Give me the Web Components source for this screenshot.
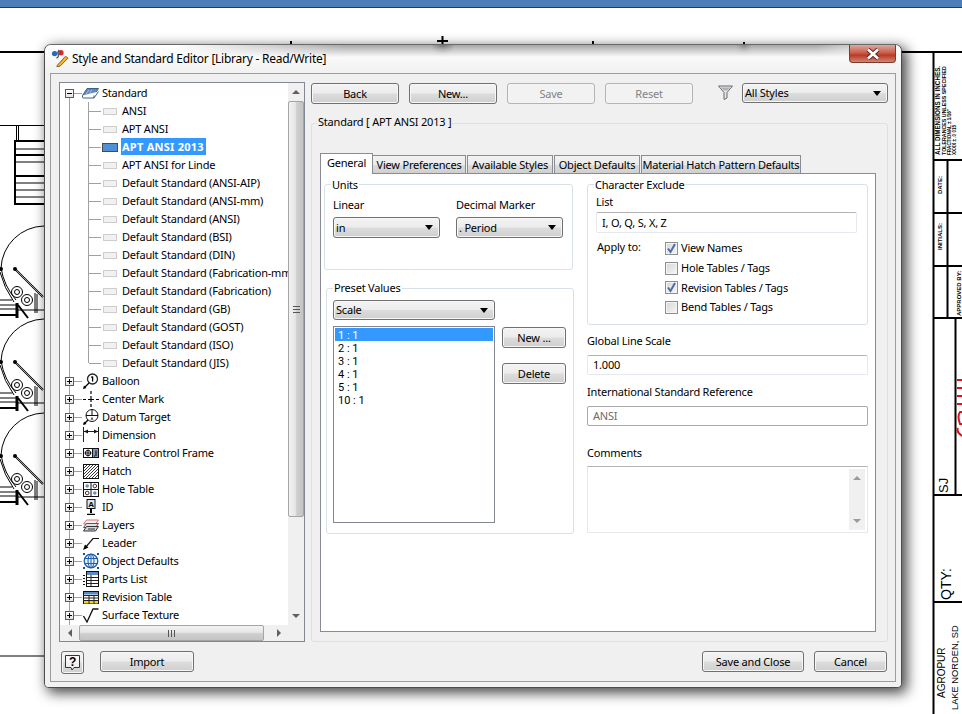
<!DOCTYPE html>
<html><head><meta charset="utf-8"><title>Style and Standard Editor</title>
<style>
html,body{margin:0;padding:0;background:#fff}
body{width:962px;height:714px;position:relative;overflow:hidden;font:11px/14px "Noto Sans","Liberation Sans",sans-serif;letter-spacing:-.2px;color:#000}
</style></head><body>
<x-appbar></x-appbar>
<x-drawing></x-drawing>
<x-dialog caption="Style and Standard Editor [Library - Read/Write]">
  <x-tree style="width:246px;height:560px">
    <x-tree-row kind="open"><svg slot="icon" width="17" height="12" viewBox="0 0 17 12"><path d="M.5 8.500L5 1.500H16.500L12 8.500Z" fill="#6287ba" stroke="#3c5f8c"/><path d="M.5 8.500V10Q.5 11 1.500 11H12L16.500 4.500M12 8.500V11" fill="#fff" stroke="#3c5f8c"/><path d="M4 7L7 3M7 7L10 3" stroke="#a9c0de"/></svg>Standard</x-tree-row>
    <x-tree-row kind="child">ANSI</x-tree-row>
    <x-tree-row kind="child">APT ANSI</x-tree-row>
    <x-tree-row kind="child" selected><b style="letter-spacing:.25px">APT ANSI 2013</b></x-tree-row>
    <x-tree-row kind="child">APT ANSI for Linde</x-tree-row>
    <x-tree-row kind="child">Default Standard (ANSI-AIP)</x-tree-row>
    <x-tree-row kind="child">Default Standard (ANSI-mm)</x-tree-row>
    <x-tree-row kind="child">Default Standard (ANSI)</x-tree-row>
    <x-tree-row kind="child">Default Standard (BSI)</x-tree-row>
    <x-tree-row kind="child">Default Standard (DIN)</x-tree-row>
    <x-tree-row kind="child">Default Standard (Fabrication-mm)</x-tree-row>
    <x-tree-row kind="child">Default Standard (Fabrication)</x-tree-row>
    <x-tree-row kind="child">Default Standard (GB)</x-tree-row>
    <x-tree-row kind="child">Default Standard (GOST)</x-tree-row>
    <x-tree-row kind="child">Default Standard (ISO)</x-tree-row>
    <x-tree-row kind="last">Default Standard (JIS)</x-tree-row>
    <x-tree-row><svg slot="icon" width="16" height="16" viewBox="0 0 16 16"><circle cx="9.500" cy="6" r="5" fill="#fff" stroke="#222" stroke-width="1.300"/><path d="M9.600 3.500V8.500M8.300 4.500L9.600 3.500" stroke="#000" stroke-width="1.300" fill="none"/><path d="M6 10L1 15" stroke="#000" stroke-width="1.200"/><path d="M0 16L1 12.500L3.500 15Z"/></svg>Balloon</x-tree-row>
    <x-tree-row><svg slot="icon" width="16" height="16" viewBox="0 0 16 16"><path d="M0 8.500H3M5 8.500H11M13 8.500H16M8 0V3M8 5V11M8 13V16" stroke="#000" stroke-width="1.200" fill="none"/></svg>Center Mark</x-tree-row>
    <x-tree-row><svg slot="icon" width="16" height="16" viewBox="0 0 16 16"><circle cx="9" cy="6.500" r="6" fill="#fff" stroke="#111"/><path d="M3 6.500H15M9 .5V6.500" stroke="#111"/><path d="M8 11L9 8.500L10 11" stroke="#555" fill="none"/><path d="M5 11L1 15" stroke="#000" stroke-width="1.200"/><path d="M0 16L1 12.500L3.500 15Z"/></svg>Datum Target</x-tree-row>
    <x-tree-row><svg slot="icon" width="16" height="16" viewBox="0 0 16 16"><path d="M.5 0V15M15.500 0V15M1 4.500H15" stroke="#222" fill="none"/><path d="M1 4.500L5 2.500V6.500ZM15 4.500L11 2.500V6.500Z" fill="#111"/></svg>Dimension</x-tree-row>
    <x-tree-row><svg slot="icon" width="16" height="11" viewBox="0 0 16 11"><rect x=".5" y=".5" width="15" height="9" fill="#fff" stroke="#111"/><path d="M9.500 0V10" stroke="#111"/><circle cx="5" cy="5" r="2.700" fill="none" stroke="#111"/><path d="M1.500 5H8.500M5 1.500V8.500" stroke="#111"/><rect x="10" y="1" width="5" height="8" fill="#7d97b8"/><path d="M13 2.500V8M11 8H12" stroke="#000"/></svg>Feature Control Frame</x-tree-row>
    <x-tree-row><svg slot="icon" width="16" height="15" viewBox="0 0 16 15"><rect x=".5" y=".5" width="15" height="14" fill="#fff" stroke="#111"/><path d="M1 4L4 1M1 7L7 1M1 10L10 1M1 13L13 1M3 14L15 2M6 14L15 5M9 14L15 8M12 14L15 11" stroke="#222" stroke-width=".9"/></svg>Hatch</x-tree-row>
    <x-tree-row><svg slot="icon" width="16" height="15" viewBox="0 0 16 15"><rect x=".5" y=".5" width="15" height="14" fill="#fff" stroke="#111"/><path d="M8 0V15M0 7.500H16" stroke="#111"/><circle cx="4.200" cy="4" r="1.800" fill="#6f8fb5"/><circle cx="11.800" cy="4" r="1.800" fill="none" stroke="#333"/><circle cx="4.200" cy="11" r="1.800" fill="none" stroke="#333"/><circle cx="11.800" cy="11" r="1.800" fill="#6f8fb5"/></svg>Hole Table</x-tree-row>
    <x-tree-row><svg slot="icon" width="16" height="16" viewBox="0 0 16 16"><rect x="4" y=".5" width="8" height="9" fill="#dfe5ee" stroke="#111"/><text x="8" y="8" font-size="8" font-weight="700" text-anchor="middle" font-family="Liberation Sans">A</text><path d="M8 10V14" stroke="#000" stroke-width="2"/><path d="M4 15.500H12" stroke="#000" stroke-width="1.500"/></svg>ID</x-tree-row>
    <x-tree-row><svg slot="icon" width="16" height="13" viewBox="0 0 16 13"><path d="M3.500 1H15.500L12.500 5H.5Z" fill="#f2f2f2" stroke="#e06a6a"/><path d="M3.500 4.500H15.500L12.500 8.500H.5Z" fill="#e0e4ea" stroke="#555"/><path d="M3.500 7.500H15.500L12.500 12H.5Z" fill="#d0d6de" stroke="#333"/><path d="M5 10H12" stroke="#333"/></svg>Layers</x-tree-row>
    <x-tree-row><svg slot="icon" width="16" height="13" viewBox="0 0 16 13"><path d="M16 1.500H10L2 11" fill="none" stroke="#111" stroke-width="1.200"/><path d="M0 13L2 7.500L5.500 10.500Z" fill="#000"/></svg>Leader</x-tree-row>
    <x-tree-row><svg slot="icon" width="16" height="16" viewBox="0 0 16 16"><circle cx="8" cy="8" r="6.800" fill="#e6f0fa" stroke="#1d5fae" stroke-width="1.300"/><ellipse cx="8" cy="8" rx="3" ry="6.800" fill="none" stroke="#1d5fae"/><path d="M8 1V15M1.200 5.500H14.800M1.200 10.500H14.800" stroke="#1d5fae"/><path d="M0 0H2V2H0ZM14 0H16V2H14ZM0 14H2V16H0ZM14 14H16V16H14Z" fill="#1d4f96"/></svg>Object Defaults</x-tree-row>
    <x-tree-row><svg slot="icon" width="16" height="16" viewBox="0 0 16 16"><rect x="3.500" y=".5" width="12" height="15" fill="#fff" stroke="#111"/><rect x="4" y="1" width="11" height="3" fill="#5b8bc4"/><path d="M4 6.500H15M4 9.500H15M4 12.500H15M8 4V15" stroke="#222"/><path d="M0 4.500H2M0 7.500H2M0 10.500H2M0 13.500H2" stroke="#111"/></svg>Parts List</x-tree-row>
    <x-tree-row><svg slot="icon" width="16" height="13" viewBox="0 0 16 13"><rect x=".5" y=".5" width="15" height="12" fill="#fff" stroke="#111"/><rect x="1" y="1" width="14" height="2.500" fill="#5b8bc4"/><rect x="1" y="9.500" width="14" height="3" fill="#f3d21b"/><path d="M0 4.500H16M0 7H16M0 9.500H16M6 4V13M11 4V13" stroke="#222"/></svg>Revision Table</x-tree-row>
    <x-tree-row><svg slot="icon" width="16" height="15" viewBox="0 0 16 15"><path d="M.5 8L4 14L10 1H15.500" fill="none" stroke="#111" stroke-width="1.300"/></svg>Surface Texture</x-tree-row>
  </x-tree>
  <x-col slot="right">
    <x-toolbar>
      <x-button w="88">Back</x-button><x-button w="88">New...</x-button><x-button w="88" disabled>Save</x-button><x-button w="88" disabled>Reset</x-button>
      <svg style="margin-left:25px;margin-right:9px;flex:none" width="15" height="15" viewBox="0 0 15 15"><path d="M.5 1H14.500L9 7.500V13L6 14.500V7.500Z" fill="#e4e4e4" stroke="#6b6b6b"/><path d="M2.500 2.500H12.500L9 5.500H6Z" fill="#aab3bc"/></svg>
      <x-select w="146" h="20">All Styles</x-select>
    </x-toolbar>
    <x-group legend="Standard [ APT ANSI 2013 ]" w="577" h="519" pad="29px 0 0 8px" radius="3" lx="5" ly="-9">
      <x-tabs>
        <x-tab w="53" active>General</x-tab><x-tab w="93">View Preferences</x-tab><x-tab w="86" gap="1">Available Styles</x-tab><x-tab w="86" gap="1">Object Defaults</x-tab><x-tab w="160" gap="1">Material Hatch Pattern Defaults</x-tab>
        <x-general slot="panel"></x-general>
      </x-tabs>
    </x-group>
  </x-col>
  <x-footer slot="footer">
    <x-helpbtn></x-helpbtn>
    <x-button w="94" style="margin-left:16px">Import</x-button>
    <x-button w="102" style="margin-left:auto">Save and Close</x-button>
    <x-button w="73" style="margin-left:10px;margin-right:1px">Cancel</x-button>
  </x-footer>
</x-dialog>
<script>
const def=(name,css,html)=>customElements.define(name,class extends HTMLElement{
  connectedCallback(){ if(this.shadowRoot) return;
    const s=this.attachShadow({mode:'open'});
    s.innerHTML='<style>'+css(this)+'</style>'+(typeof html==='function'?html(this):html);
  }});
const a=(e,n,d)=>e.hasAttribute(n)?e.getAttribute(n):d;
const btnGrad='linear-gradient(#f3f3f3 0,#ececec 48%,#dcdcdc 52%,#cfcfcf 100%)';

def('x-appbar',()=>`:host{display:block;height:7px;background:#4d7eb7;border-bottom:1px solid #1f3d63;box-sizing:content-box}`,'');

def('x-drawing',()=>`:host{position:absolute;left:0;top:0;width:962px;height:714px;display:block}svg{display:block}text{font-family:"Liberation Sans",sans-serif;letter-spacing:0}`,()=>{
 const tank=`<g fill="none" stroke="#000"><path d="M44 0A44 44 0 0 0 1 42Q4 60 16 74"/><path d="M0 46Q4 62 14 76"/><path d="M15 43L43 71" stroke-width="2"/><path d="M15 43L43 71" stroke="#fff" stroke-width=".6"/><circle cx="17" cy="66" r="5.500"/><circle cx="17" cy="66" r="2.500"/><circle cx="27" cy="74" r="5.500"/><circle cx="27" cy="74" r="2.500"/><path d="M35 67V87M37 68V87"/><path d="M0 74H12M0 79H16M0 83H16M17 84H44"/><path d="M17 77V92" stroke-width="3"/><path d="M0 89H17" stroke-width="2"/><path d="M18 79L28 92" stroke-width="2"/></g><circle cx="15" cy="43" r="2" fill="#000"/><circle cx="1" cy="43" r="2" fill="#000"/>`;
 const T=(x,y,s,t,o='')=>`<text transform="translate(${x} ${y}) rotate(-90)" font-size="${s}" ${o}>${t}</text>`;
 return `<svg width="962" height="714" viewBox="0 0 962 714">
 <path d="M0 52H60M890 52H962" stroke="#000" stroke-width="2"/>
 <path d="M0 125.500H60" stroke="#000"/>
 <path d="M18.500 125V141M16.500 126V141" stroke="#000"/>
 <g fill="none" stroke="#000"><rect x="15" y="141" width="40" height="63" stroke-width="2"/><path d="M16 149H50M16 162H50M16 183H50M16 190H50M16 197H50"/><path d="M16 155H50M16 176H50" stroke-width="2"/></g>
 <g transform="translate(0 226)">${tank}</g><g transform="translate(0 319)">${tank}</g><g transform="translate(0 413)">${tank}</g>
 <path d="M0 656H60" stroke="#000"/>
 <path d="M442.500 36V46M437 41H448M291 41V46M593 41V46M744 42V46" stroke="#000" stroke-width="2"/>
 <g stroke="#000" stroke-width="2" fill="none"><path d="M933.500 52V714M947.500 160V318M955.500 318V495"/><path d="M933 160H962M933 213H962M933 266H962M933 318H962M933 495H962M933 602H962"/></g>
 ${T(940,155,6.300,'ALL DIMENSIONS IN INCHES.','font-weight="700"')}
 ${T(946,155,5.300,'TOLERANCES UNLESS SPECIFIED','font-weight="700"')}
 ${T(951,155,4.600,'FRACTIONAL ± 1/16"','font-weight="700"')}
 ${T(956,155,4.600,'XXXX ± .0 015','font-weight="700"')}
 ${T(942,194,6,'DATE:','font-weight="700"')}
 ${T(942,250,6,'INITIALS:','font-weight="700"')}
 ${T(961,316,6,'APPROVED BY:','font-weight="700"')}
 ${T(948,493,13,'SJ')}
 ${T(951,600,14,'QTY:')}
 ${T(945,698,10,'AGROPUR')}
 ${T(958,710,9.300,'LAKE NORDEN, SD')}
 <g fill="none" stroke="#e01020" stroke-width="2"><path d="M957 380H962M957 388H962M957 396H962M957 404H962"/><path d="M962 412H960Q957 416 960 424H962M958 428Q956 432 962 436"/></g>
 </svg>`});

def('x-dialog',()=>`:host{position:absolute;left:44px;top:44px;width:858px;height:644px;box-sizing:border-box;display:flex;flex-direction:column;border-radius:7px 7px 5px 5px;background:#f1f1f1;box-shadow:4px 4px 13px 1px rgba(0,0,0,.72);border:1px solid #4c4c4c;border-top-color:#6a6a6a;padding:0 5px 5px}
 .bg{position:absolute;inset:0;border-radius:6px 6px 4px 4px;background:linear-gradient(#fff,#f1f1f1 28px) 0 0 no-repeat;pointer-events:none}
 .band{position:absolute;left:0;right:0;top:0;height:12px;border-radius:6px 6px 0 0;background:radial-gradient(ellipse 12px 12px at 398px 0,rgba(70,70,70,.6),rgba(70,70,70,0)) no-repeat,radial-gradient(ellipse 8px 11px at 699px 0,rgba(90,90,90,.5),rgba(90,90,90,0)) no-repeat,linear-gradient(90deg,rgba(150,150,150,0) 15%,rgba(150,150,150,.85) 35%,rgba(150,150,150,.85) 90%,rgba(150,150,150,0));-webkit-mask-image:linear-gradient(#000,transparent);mask-image:linear-gradient(#000,transparent);pointer-events:none}
 .title{position:relative;height:28px;display:flex;align-items:center;flex:none;font:12px/16px "Noto Sans","Liberation Sans",sans-serif;letter-spacing:-.25px;color:#000;padding:0 0 0 1px}
 .title svg.ico{margin-right:3px;flex:none}
 .close{position:absolute;right:0;top:0;width:47px;height:18px;border:1px solid #7a3a30;border-top:none;box-sizing:border-box;border-radius:0 0 4px 4px;background:linear-gradient(#dba99f,#c9604c 45%,#b93a26 60%,#d28674);display:flex;align-items:center;justify-content:center}
 .panel{position:relative;flex:1;border:1px solid #9c9c9c;background:#f0f0f0;padding:8px 7px 8px 8px;display:flex;flex-direction:column;min-height:0}
 .main{display:flex;gap:6px;flex:none}
 .foot{margin-top:9px}`,
 e=>`<div class="bg"></div><div class="band"></div><div class="title"><svg class="ico" width="18" height="20" viewBox="0 0 20 22"><circle cx="4" cy="5" r="3" fill="#2b69b8"/><circle cx="11" cy="4" r="3" fill="#d8282b"/><path d="M6 10Q9 9 8 6Q7 3 9 1" stroke="#555" stroke-width="1.500" fill="none"/><path d="M7 18L16 8L19 10L10 19L6.500 19.500Z" fill="#f3b32c" stroke="#7a5a10"/></svg>${a(e,'caption','')}<div class="close"><svg width="16" height="12" viewBox="0 0 16 12"><path d="M3 1.500L13 10.500M13 1.500L3 10.500" stroke="#5a2018" stroke-width="4.500"/><path d="M3 1.500L13 10.500M13 1.500L3 10.500" stroke="#fff" stroke-width="2.700"/></svg></div></div>
 <div class="panel"><div class="main"><slot></slot><slot name="right"></slot></div><div class="foot"><slot name="footer"></slot></div></div>`);

def('x-col',()=>`:host{display:flex;flex-direction:column;width:577px;padding-top:1px}`,'<slot></slot>');
def('x-toolbar',()=>`:host{display:flex;gap:0;height:21px;margin-bottom:19px;align-items:flex-start}::slotted(x-button){margin-right:10px}::slotted(x-button:nth-of-type(4)){margin-right:0}::slotted(svg){margin-top:2px}`,'<slot></slot>');
def('x-footer',()=>`:host{display:flex;padding-left:2px;align-items:flex-start}`,'<slot></slot>');

def('x-button',e=>`:host{display:flex;align-items:center;justify-content:center;flex:none;box-sizing:border-box;width:${a(e,'w',88)}px;height:${a(e,'h',21)}px;border:1px solid ${e.hasAttribute('disabled')?'#b2b5b8':'#707070'};border-radius:3px;background:${e.hasAttribute('disabled')?'#f2f2f2':btnGrad};box-shadow:inset 0 0 0 1px ${e.hasAttribute('disabled')?'#f4f4f4':'#f7f7f7'};color:${e.hasAttribute('disabled')?'#838383':'#000'};white-space:nowrap}`,'<slot></slot>');

def('x-helpbtn',()=>`:host{display:block;width:23px;height:23px;box-sizing:border-box;border:1px solid #707070;border-radius:3px;background:${btnGrad};box-shadow:inset 0 0 0 1px #f7f7f7}svg{display:block;margin:2px}text{font:700 12px "Liberation Sans",sans-serif}`,`<svg width="17" height="17" viewBox="0 0 17 17"><path d="M1.500 1.500H15.500V13.500H10L8 16L7 13.500H1.500Z" fill="#fff" fill-opacity=".6" stroke="#333"/><text x="8.500" y="11.500" text-anchor="middle">?</text></svg>`);

def('x-select',e=>`:host{display:flex;align-items:center;flex:none;box-sizing:border-box;width:${a(e,'w',100)}px;height:${a(e,'h',21)}px;border:1px solid #707070;border-radius:3px;background:${btnGrad};box-shadow:inset 0 0 0 1px #f7f7f7;padding:0 5px 0 2px;white-space:nowrap}.t{flex:1}.a{width:0;height:0;border:4px solid transparent;border-top:5px solid #000;border-bottom:0;margin-right:1px}`,`<span class="t"><slot></slot></span><span class="a"></span>`);

def('x-group',e=>`:host{display:block;position:relative;box-sizing:border-box;width:${a(e,'w',100)}px;height:${a(e,'h',100)}px;border:1px solid #d9e0e8;border-radius:${a(e,'radius',3)}px;padding:${a(e,'pad','0')}}.l{position:absolute;left:${a(e,'lx',6)}px;top:${a(e,'ly',-7)}px;background:${a(e,'lbg','#f0f0f0')};padding:0 1px;line-height:14px;white-space:nowrap}`,e=>`<div class="l">${a(e,'legend','')}</div><slot></slot>`);

def('x-tree',()=>`:host{display:grid;box-sizing:border-box;flex:none;border:1px solid #828790;background:#fff;grid-template-columns:1fr 16px;grid-template-rows:1fr 16px}
 .v{overflow:hidden;padding-top:1px;background:linear-gradient(#a0a0a0,#a0a0a0) 9px 14px/1px 100% no-repeat;min-width:0}
 .corner{background:#f0f0f0}`,`<div class="v"><slot></slot></div><x-scrollbar dir="v" b="90"></x-scrollbar><x-scrollbar dir="h" b="5"></x-scrollbar><div class="corner"></div>`);

def('x-tree-row',e=>{const sel=e.hasAttribute('selected');
 return `:host{display:block;height:18px;white-space:nowrap;position:relative}
 .r{display:flex;align-items:center;height:18px}
 .box{box-sizing:border-box;flex:none;width:9px;height:9px;border:1px solid #5a5a5a;background:linear-gradient(#fff,#e4e4e4);margin-left:5px;position:relative}
 .box:before{content:"";position:absolute;left:1px;right:1px;top:3px;height:1px;background:#000}
 .box.plus:after{content:"";position:absolute;top:1px;bottom:1px;left:3px;width:1px;background:#000}
 .hl{flex:none;width:8px;height:1px;background:#a0a0a0}
 .ic{flex:none;width:17px;height:18px;display:flex;align-items:center;justify-content:center;margin-right:2px}
 .vl{flex:none;width:1px;align-self:stretch;margin-left:28px;background:#a0a0a0}
 .vl.last{align-self:flex-start;height:9px}
 .h2{flex:none;width:12px;height:1px;background:#a0a0a0}
 .sheet{flex:none;width:14px;height:7px;box-sizing:border-box;border:1px solid #cdcdcd;background:#f1f1f1;margin:0 3px 0 2px}
 .sheet.s{width:16px;height:9px;border-color:#4a4a4a;background:#4f8fd4;margin:0 2px 0 1px}
 .txt{padding:0 1px;line-height:16px;margin-left:1px;${sel?'background:#3399ff;color:#fff;padding:1px 2px 0 1px;margin-top:-1px;':''}}`},
 e=>{const k=a(e,'kind','root');
 if(k==='child'||k==='last')return `<div class="r"><span class="vl ${k==='last'?'last':''}"></span><span class="h2"></span><span class="sheet ${e.hasAttribute('selected')?'s':''}"></span><span class="txt"><slot></slot></span></div>`;
 return `<div class="r"><span class="box ${k==='open'?'':'plus'}"></span><span class="hl"></span><span class="ic"><slot name="icon"></slot></span><span class="txt" style="margin-left:0"><slot></slot></span></div>`});

def('x-scrollbar',e=>{const v=a(e,'dir','v')==='v';return `:host{display:flex;flex-direction:${v?'column':'row'};background:#f0f0f0;${v?'width:16px':'height:16px'};box-sizing:border-box;align-items:stretch;min-width:0;min-height:0}
 .ar{flex:none;${v?'height:18px':'width:19px'};display:flex;align-items:center;justify-content:center}
 .th{flex:1;box-sizing:border-box;border:1px solid #a5a5a5;border-radius:2px;background:linear-gradient(${v?'90deg':'180deg'},#f2f2f2,#e6e6e6 45%,#cfcfcf 55%,#c4c4c4);display:flex;align-items:center;justify-content:center}
 .sp{flex:none;${v?'height':'width'}:${a(e,'b',0)}px}
 .g{${v?'width:7px;height:7px;background:repeating-linear-gradient(#555 0 1px,transparent 1px 3px)':'width:7px;height:7px;background:repeating-linear-gradient(90deg,#555 0 1px,transparent 1px 3px)'}}
 .t{width:0;height:0;border:4px solid transparent}`},
 e=>{const v=a(e,'dir','v')==='v';const c='#606060';
 const s1=v?`border-bottom:4px solid ${c};border-top:0`:`border-right:4px solid ${c};border-left:0`;
 const s2=v?`border-top:4px solid ${c};border-bottom:0`:`border-left:4px solid ${c};border-right:0`;
 return `<div class="ar"><i class="t" style="${s1}"></i></div><div class="th"><i class="g"></i></div><div class="sp"></div>`+`<div class="ar"><i class="t" style="${s2}"></i></div>`});

def('x-tabs',()=>`:host{display:block;width:556px}.s{display:flex;height:20px;align-items:flex-end;position:relative;z-index:1}.p{box-sizing:border-box;height:459px;border:1px solid #898c95;background:#fff;margin-top:0}`,`<div class="s"><slot></slot></div><div class="p"><slot name="panel"></slot></div>`);
def('x-tab',e=>{const ac=e.hasAttribute('active');const g=e.hasAttribute('gap');return `:host{display:flex;align-items:center;justify-content:center;flex:none;box-sizing:border-box;width:${a(e,'w',80)}px;margin-left:${a(e,'gap',0)}px;border:1px solid #898c95;white-space:nowrap;${ac?'height:21px;border-bottom:none;background:#fff;margin-bottom:-1px;padding-bottom:3px;':'height:18px;'+(g?'':'border-left:none;')+'border-bottom:none;background:linear-gradient(#f2f2f2,#ebebeb 50%,#ddd 50%,#cfcfcf);'}}`},'<slot></slot>');

def('x-check',e=>`:host{display:flex;align-items:center;height:${a(e,'h',20)}px;white-space:nowrap}.b{flex:none;box-sizing:border-box;width:13px;height:13px;border:1px solid #8e8f8f;background:linear-gradient(135deg,#d6d6d6,#f6f6f6);box-shadow:inset 0 0 0 1px #f4f4f4;margin-right:3px;display:block}`,e=>`<span class="b">${e.hasAttribute('checked')?'<svg width="11" height="11" viewBox="0 0 11 11" style="display:block"><path d="M2 5.500L4.500 9L9 1" fill="none" stroke="#4a6ea8" stroke-width="2"/></svg>':''}</span><slot></slot>`);

def('x-input',e=>`:host{display:flex;align-items:center;box-sizing:border-box;width:${a(e,'w',281)}px;height:${a(e,'h',20)}px;border:1px solid;border-color:${e.hasAttribute('disabled')?'#a8a8a8':'#b4b4b8 #e3e9ef #e3e9ef #e3e9ef'};border-radius:2px;background:#fff;padding-left:5px;color:${e.hasAttribute('disabled')?'#6d6d6d':'#000'}}`,'<slot></slot>');

def('x-list',()=>`:host{display:block;box-sizing:border-box;width:162px;height:197px;border:1px solid #828790;background:#fff;padding:1px}`,'<slot></slot>');
def('x-item',e=>`:host{display:block;box-sizing:border-box;height:13px;line-height:13px;padding:1px 0 0 3px;font-family:Roboto,"Liberation Sans",sans-serif;letter-spacing:0;${e.hasAttribute('selected')?'background:#3399ff;color:#fff;':''}}`,'<slot></slot>');

def('x-general',()=>`:host{display:flex;height:100%}
 .l{width:266px;flex:none;padding-top:10px}.r{flex:1;padding-top:10px}
 .units{margin-left:3px}.preset{margin:18px 0 0 5px}
 .two{display:grid;grid-template-columns:123px 107px;padding:13px 0 0 8px}
 .lab{line-height:14px;height:14px}
 .two x-select{margin-top:5px}
 .pre{padding:11px 0 0 6px}
 .prow{display:flex;gap:7px;margin-top:6px}
 .btns{display:flex;flex-direction:column;gap:15px;padding-top:1px}
 .lst{padding:10px 0 0 8px}
 .apply{display:flex;margin-top:5px}
 .apply .a{width:69px;line-height:14px;padding-left:1px;box-sizing:border-box;margin-top:2px}
 .fld{line-height:14px;height:14px}
 .ta{box-sizing:border-box;width:281px;height:67px;border:1px solid;border-color:#b4b4b8 #e3e9ef #e3e9ef #e3e9ef;display:flex;justify-content:flex-end;padding:2px}
 .sb{width:16px;background:#f0f0f0;display:flex;flex-direction:column;justify-content:space-between;align-items:center;padding:7px 0}
 .t{width:0;height:0;border:4px solid transparent}`,
 `<div class="l">
   <x-group class="units" legend="Units" lbg="#fff" lx="6" w="249" h="86"><div class="two"><div class="lab">Linear</div><div class="lab">Decimal Marker</div><x-select w="107">in</x-select><x-select w="107">. Period</x-select></div></x-group>
   <x-group class="preset" legend="Preset Values" lbg="#fff" lx="6" ly="-8" w="248" h="246"><div class="pre"><x-select w="162" h="20">Scale</x-select>
     <div class="prow"><x-list><x-item selected>1 : 1</x-item><x-item>2 : 1</x-item><x-item>3 : 1</x-item><x-item>4 : 1</x-item><x-item>5 : 1</x-item><x-item>10 : 1</x-item></x-list>
     <div class="btns"><x-button w="64">New ...</x-button><x-button w="64">Delete</x-button></div></div></div></x-group>
 </div>
 <div class="r">
   <x-group legend="Character Exclude" lbg="#fff" w="281" h="141"><div class="lst"><div class="fld">List</div><x-input w="261" h="21" style="margin-top:3px">I, O, Q, S, X, Z</x-input>
     <div class="apply"><div class="a">Apply to:</div><div><x-check checked h="20">View Names</x-check><x-check h="20">Hole Tables / Tags</x-check><x-check checked h="19">Revision Tables / Tags</x-check><x-check h="20">Bend Tables / Tags</x-check></div></div></div></x-group>
   <div class="fld" style="margin-top:9px">Global Line Scale</div><x-input style="margin-top:7px">1.000</x-input>
   <div class="fld" style="margin-top:10px">International Standard Reference</div><x-input disabled style="margin-top:7px">ANSI</x-input>
   <div class="fld" style="margin-top:20px">Comments</div>
   <div class="ta" style="margin-top:6px"><div class="sb"><i class="t" style="border-bottom:4px solid #9a9a9a;border-top:0"></i><i class="t" style="border-top:4px solid #9a9a9a;border-bottom:0"></i></div></div>
 </div>`);
</script>
</body></html>
